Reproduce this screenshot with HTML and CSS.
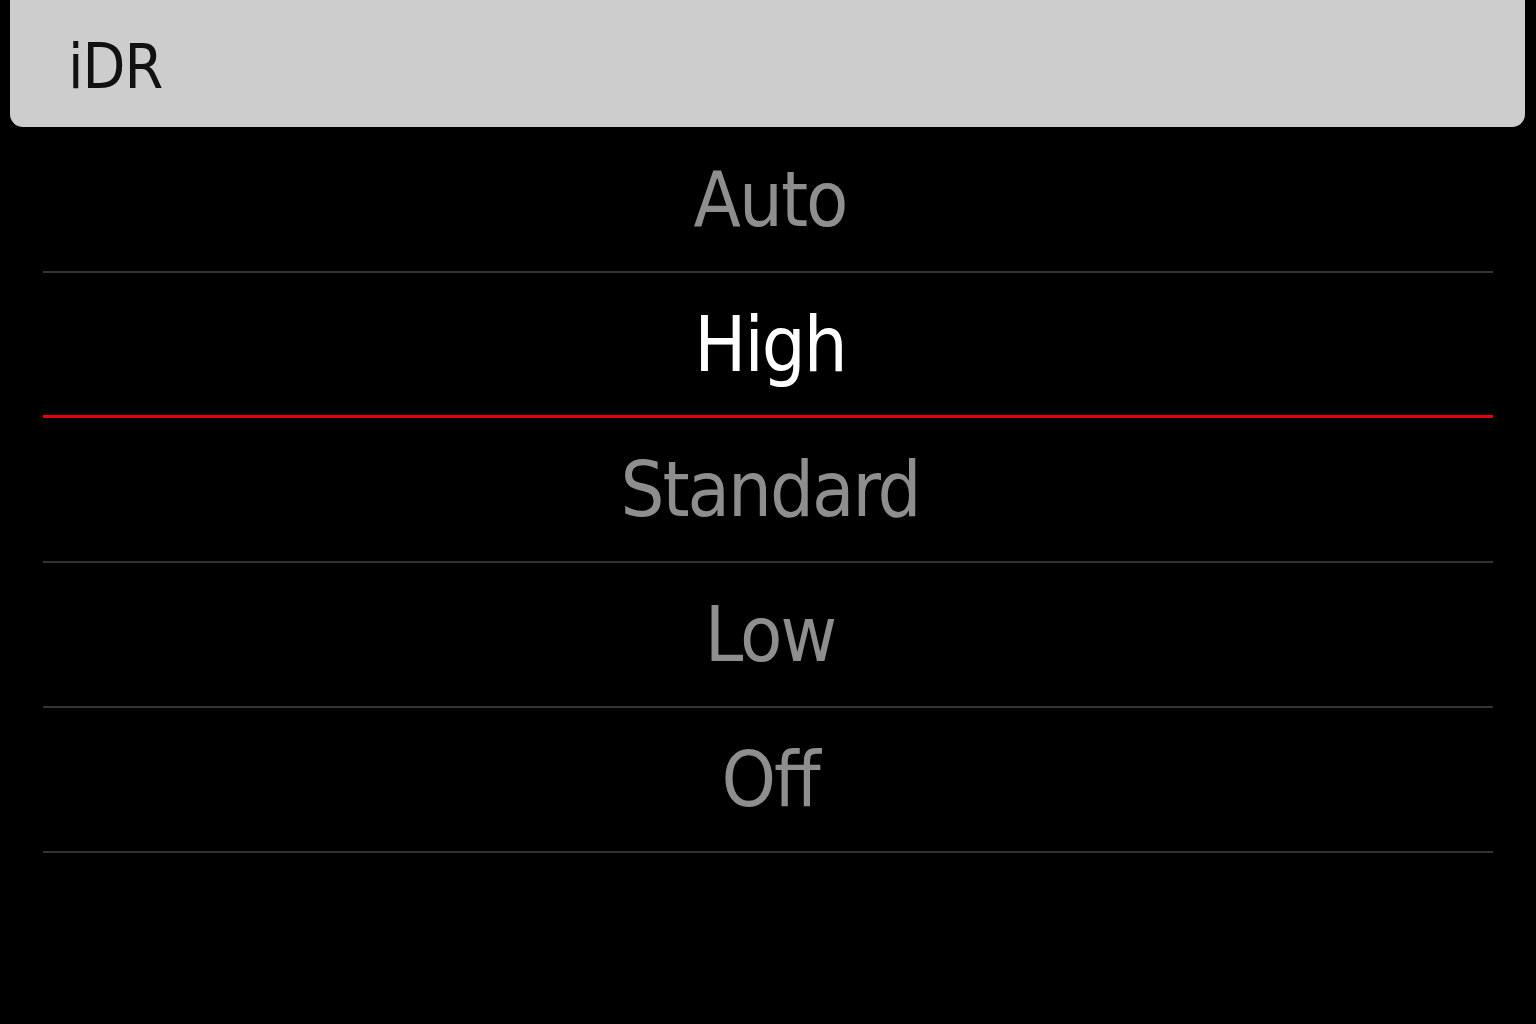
FILE: index.html
```html
<!DOCTYPE html>
<html lang="en">
<head>
    <meta charset="UTF-8">
    <meta name="viewport" content="width=device-width, initial-scale=1.0">
    <title>iDR</title>
    <link rel="stylesheet" href="styles.css">
</head>
<body>
    <div class="header">
        <span class="title">iDR</span>
    </div>

    <ul class="options">
        <li class="option">Auto</li>
        <li class="option selected">High</li>
        <li class="option">Standard</li>
        <li class="option">Low</li>
        <li class="option">Off</li>
    </ul>
</body>
</html>
```

FILE: styles.css
```css
html, body {
    height: 100%;
}
body {
    margin: 0;
    padding: 0;
    background-color: #000;
    font-family: "DejaVu Sans Condensed", "DejaVu Sans", sans-serif;
    font-stretch: condensed;
    overflow: hidden;
}
.header {
    margin: 0 11px 0 10px;
    height: 127px;
    background-color: #cdcdcd;
    border-radius: 0 0 13px 13px;
    display: flex;
    align-items: center;
    padding-left: 58px;
}
.title {
    font-size: 62px;
    letter-spacing: -1px;
    color: #111;
    line-height: 1;
    margin-top: 6px;
}
.options {
    list-style: none;
    margin: 0 43px;
    padding: 0;
}
.option {
    height: 143px;
    border-bottom: 2px solid #333;
    display: flex;
    align-items: center;
    justify-content: center;
    padding-left: 4px;
    font-size: 77px;
    letter-spacing: -2px;
    color: #8e8e8e;
    line-height: 1;
}
.option:first-child {
    height: 144px;
}
.option.selected {
    color: #fff;
    border-bottom: 3px solid #e3000f;
    height: 142px;
}
```
